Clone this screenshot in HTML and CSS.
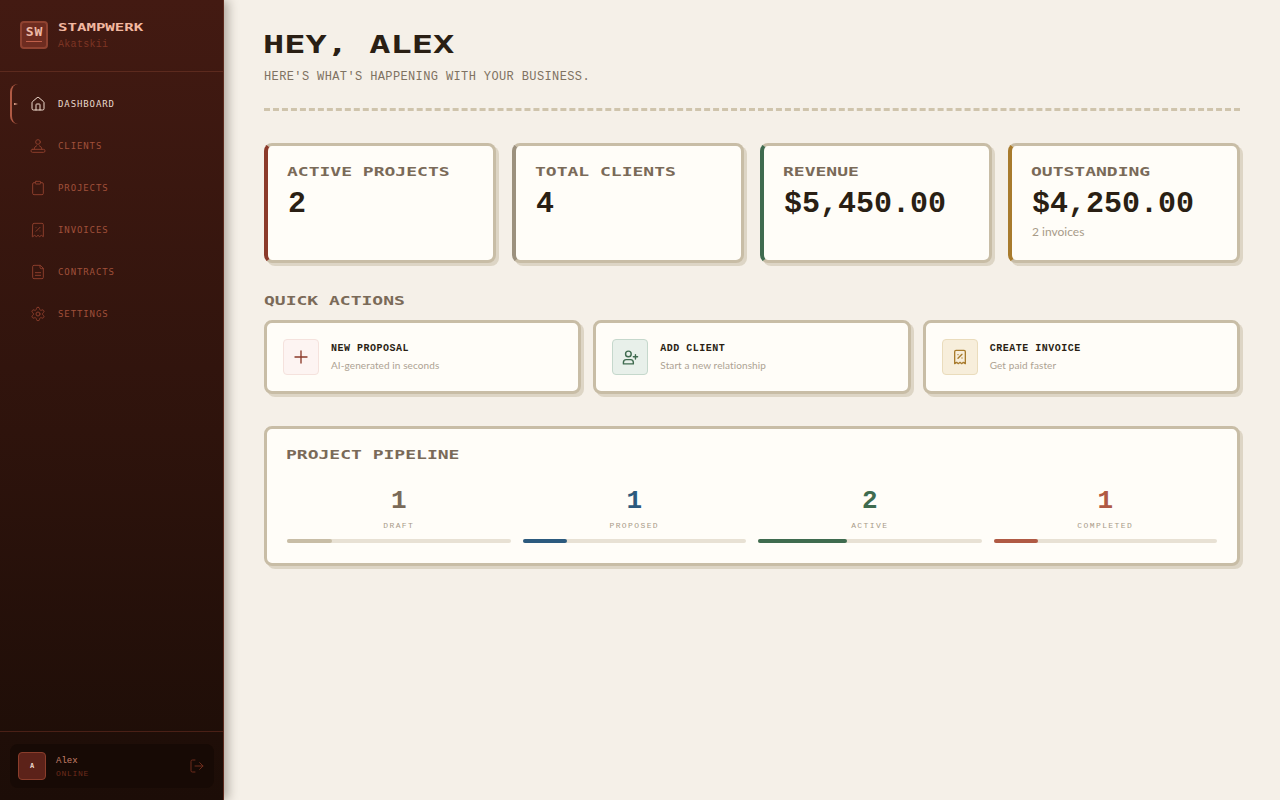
FILE: index.html
```html
<!DOCTYPE html>
<html>

	<head>
		<meta charset="UTF-8">
		<title>Stampwerk</title>
		<link rel="stylesheet" href="styles.css">
	</head>

	<body>
		<svg class="defs" width="0" height="0">
			<symbol id="i-receipt" viewBox="0 0 24 24">
				<path d="M4 4a2 2 0 0 1 2-2h12a2 2 0 0 1 2 2v18l-3-2-2.5 2-2.5-2-2.5 2L7 20l-3 2z" />
				<path d="M9 14l6-6" />
				<path d="M9 8.5h.01M15 13.5h.01" />
			</symbol>
		</svg>

		<aside class="sidebar">
			<div class="brand">
				<div class="logo"><span class="logo-text">SW</span><i class="logo-line"></i></div>
				<div>
					<div class="brand-name"><span class="wide">STAMPWERK</span></div>
					<div class="brand-sub">Akatskii</div>
				</div>
			</div>
			<nav class="nav">
				<a class="nav-item active">
					<svg class="icon" viewBox="0 0 24 24"><path d="M15 21v-8a1 1 0 0 0-1-1h-4a1 1 0 0 0-1 1v8" /><path d="M3 10a2 2 0 0 1 .709-1.528l7-5.999a2 2 0 0 1 2.582 0l7 5.999A2 2 0 0 1 21 10v9a2 2 0 0 1-2 2H5a2 2 0 0 1-2-2z" /></svg>
					DASHBOARD
				</a>
				<a class="nav-item">
					<svg class="icon" viewBox="0 0 24 24"><circle cx="12" cy="6" r="3.5" /><path d="M6 17a6 6 0 0 1 4-5.500M18 17a6 6 0 0 0-4-5.500" /><rect x="1.5" y="17" width="21" height="4.5" rx="2.2" /></svg>
					CLIENTS
				</a>
				<a class="nav-item">
					<svg class="icon" viewBox="0 0 24 24"><rect x="8" y="2" width="8" height="4" rx="1" /><path d="M16 4h2a2 2 0 0 1 2 2v14a2 2 0 0 1-2 2H6a2 2 0 0 1-2-2V6a2 2 0 0 1 2-2h2" /></svg>
					PROJECTS
				</a>
				<a class="nav-item">
					<svg class="icon"><use href="#i-receipt" /></svg>
					INVOICES
				</a>
				<a class="nav-item">
					<svg class="icon" viewBox="0 0 24 24"><path d="M15 2H6a2 2 0 0 0-2 2v16a2 2 0 0 0 2 2h12a2 2 0 0 0 2-2V7Z" /><path d="M15 2v3a2 2 0 0 0 2 2h3" /><path d="M16 13H8M16 17H8" /></svg>
					CONTRACTS
				</a>
				<a class="nav-item">
					<svg class="icon" viewBox="0 0 24 24"><path d="M12.22 2h-.44a2 2 0 0 0-2 2v.18a2 2 0 0 1-1 1.73l-.43.25a2 2 0 0 1-2 0l-.15-.08a2 2 0 0 0-2.73.73l-.22.38a2 2 0 0 0 .73 2.73l.15.1a2 2 0 0 1 1 1.72v.51a2 2 0 0 1-1 1.74l-.15.09a2 2 0 0 0-.73 2.73l.22.38a2 2 0 0 0 2.73.73l.15-.08a2 2 0 0 1 2 0l.43.25a2 2 0 0 1 1 1.73V20a2 2 0 0 0 2 2h.44a2 2 0 0 0 2-2v-.18a2 2 0 0 1 1-1.73l.43-.25a2 2 0 0 1 2 0l.15.08a2 2 0 0 0 2.73-.73l.22-.39a2 2 0 0 0-.73-2.73l-.15-.08a2 2 0 0 1-1-1.74v-.5a2 2 0 0 1 1-1.74l.15-.09a2 2 0 0 0 .73-2.73l-.22-.38a2 2 0 0 0-2.73-.73l-.15.08a2 2 0 0 1-2 0l-.43-.25a2 2 0 0 1-1-1.73V4a2 2 0 0 0-2-2z" /><circle cx="12" cy="12" r="3" /></svg>
					SETTINGS
				</a>
			</nav>
			<div class="side-foot">
				<div class="user">
					<div class="avatar">A</div>
					<div class="user-info">
						<div class="user-name">Alex</div>
						<div class="user-state">ONLINE</div>
					</div>
					<svg class="icon logout" viewBox="0 0 24 24"><path d="M9 21H5a2 2 0 0 1-2-2V5a2 2 0 0 1 2-2h4" /><path d="M16 17l5-5-5-5" /><path d="M21 12H9" /></svg>
				</div>
			</div>
		</aside>

		<main class="main">
			<header class="head">
				<h1 class="title"><span class="wide">HEY, ALEX</span></h1>
				<p class="subtitle">HERE'S WHAT'S HAPPENING WITH YOUR BUSINESS.</p>
			</header>

			<section class="stats">
				<div class="stat stat-red">
					<div class="label"><span class="wide">ACTIVE PROJECTS</span></div>
					<div class="value">2</div>
				</div>
				<div class="stat stat-grey">
					<div class="label"><span class="wide">TOTAL CLIENTS</span></div>
					<div class="value">4</div>
				</div>
				<div class="stat stat-green">
					<div class="label"><span class="wide">REVENUE</span></div>
					<div class="value">$5,450.00</div>
				</div>
				<div class="stat stat-gold">
					<div class="label"><span class="wide">OUTSTANDING</span></div>
					<div class="value">$4,250.00</div>
					<div class="note">2 invoices</div>
				</div>
			</section>

			<h2 class="label section-title"><span class="wide">QUICK ACTIONS</span></h2>
			<section class="actions">
				<div class="action">
					<div class="action-icon tint-red">
						<svg class="icon icon-plus" viewBox="0 0 24 24"><path d="M4 12h16M12 4v16" /></svg>
					</div>
					<div>
						<div class="action-name">NEW PROPOSAL</div>
						<div class="action-desc">AI-generated in seconds</div>
					</div>
				</div>
				<div class="action">
					<div class="action-icon tint-green">
						<svg class="icon" viewBox="0 0 24 24"><path d="M16 21v-2a4 4 0 0 0-4-4H6a4 4 0 0 0-4 4v2z" /><circle cx="9" cy="7" r="4" /><path d="M19 8v6M22 11h-6" /></svg>
					</div>
					<div>
						<div class="action-name">ADD CLIENT</div>
						<div class="action-desc">Start a new relationship</div>
					</div>
				</div>
				<div class="action">
					<div class="action-icon tint-gold">
						<svg class="icon icon-small"><use href="#i-receipt" /></svg>
					</div>
					<div>
						<div class="action-name">CREATE INVOICE</div>
						<div class="action-desc">Get paid faster</div>
					</div>
				</div>
			</section>

			<section class="pipeline">
				<h2 class="label pipe-title"><span class="wide">PROJECT PIPELINE</span></h2>
				<div class="pipe-grid">
					<div class="pipe">
						<div class="pipe-num c-draft">1</div>
						<div class="pipe-name">DRAFT</div>
						<div class="bar"><div class="fill f-draft" style="width: 20%"></div></div>
					</div>
					<div class="pipe">
						<div class="pipe-num c-proposed">1</div>
						<div class="pipe-name">PROPOSED</div>
						<div class="bar"><div class="fill f-proposed" style="width: 20%"></div></div>
					</div>
					<div class="pipe">
						<div class="pipe-num c-active">2</div>
						<div class="pipe-name">ACTIVE</div>
						<div class="bar"><div class="fill f-active" style="width: 40%"></div></div>
					</div>
					<div class="pipe">
						<div class="pipe-num c-completed">1</div>
						<div class="pipe-name">COMPLETED</div>
						<div class="bar"><div class="fill f-completed" style="width: 20%"></div></div>
					</div>
				</div>
			</section>
		</main>
	</body>

</html>
```

FILE: styles.css
```css
* {
	box-sizing: border-box;
}

body {
	margin: 0;
	height: 800px;
	overflow: hidden;
	display: flex;
	background: #f5f0e8;
	color: #2a1f14;
	font-family: "Lato", "Liberation Sans", sans-serif;
}

.defs {
	position: absolute;
}

/* stretched letters stand in for the pixel display face */
.wide {
	display: inline-block;
	font-family: "DejaVu Sans Mono", monospace;
	font-weight: bold;
	white-space: pre;
	transform: scaleX(1.5);
	transform-origin: left center;
}

.icon {
	width: 16px;
	height: 16px;
	flex: none;
	fill: none;
	stroke: currentColor;
	stroke-width: 1.5;
	stroke-linecap: round;
	stroke-linejoin: round;
}

/* sidebar */
.sidebar {
	width: 224px;
	flex: none;
	display: flex;
	flex-direction: column;
	background: linear-gradient(180deg, #431a12 0%, #1c0d07 100%);
	border-right: 1px solid #5c2a1e;
	box-shadow: 4px 0 10px rgba(42, 31, 20, 0.35);
	position: relative;
	z-index: 2;
}

.brand {
	height: 72px;
	padding: 21px 20px 0;
	display: flex;
	gap: 10px;
	border-bottom: 1px solid #5c2a1e;
}

.logo {
	width: 28px;
	height: 28px;
	display: flex;
	flex-direction: column;
	align-items: center;
	padding-top: 3px;
	background: #6e2c20;
	border: 2px solid #8f4230;
	border-radius: 4px;
}

.logo-text {
	font: bold 13px/12px "DejaVu Sans Mono", monospace;
	letter-spacing: 1px;
	margin-right: -1px;
	color: #efbba8;
}

.logo-line {
	width: 16px;
	height: 1px;
	margin-top: 3px;
	background: #c0604a;
}

.brand-name {
	margin-top: -1px;
	height: 13px;
	font-size: 11px;
	line-height: 13px;
	color: #f2b8a0;
}

.brand-name .wide {
	transform: scaleX(1.43);
}

.brand-sub {
	margin-top: 6px;
	font: 10px/12px "Liberation Mono", monospace;
	letter-spacing: 0.3px;
	color: #7d3524;
}

.nav {
	flex: 1;
	padding: 12px 10px;
	display: flex;
	flex-direction: column;
	gap: 2px;
}

.nav-item {
	height: 40px;
	display: flex;
	align-items: center;
	gap: 12px;
	padding-left: 20px;
	border-radius: 8px;
	position: relative;
	font: 9px/12px "DejaVu Sans Mono", monospace;
	letter-spacing: 0.9px;
	color: #a0503a;
}

.nav-item .icon {
	color: #8a3d2b;
}

.nav-item.active {
	border-left: 2px solid #b05a44;
	padding-left: 18px;
	color: #e8d8cc;
}

.nav-item.active .icon {
	color: #f0dccf;
}

.nav-item.active::before {
	content: "";
	position: absolute;
	left: 2px;
	top: 19px;
	border-left: 4px solid #e8a890;
	border-top: 1.5px solid transparent;
	border-bottom: 1.5px solid transparent;
}

.side-foot {
	height: 69px;
	padding: 12px 9px 12px 10px;
	border-top: 1px solid #4a2016;
}

.user {
	height: 44px;
	padding: 0 9px 0 8px;
	display: flex;
	align-items: center;
	gap: 10px;
	background: #170a05;
	border-radius: 8px;
}

.avatar {
	width: 28px;
	height: 28px;
	display: flex;
	align-items: center;
	justify-content: center;
	background: #5c2219;
	border: 1px solid #8a3d2b;
	border-radius: 4px;
	font: bold 7px "DejaVu Sans Mono", monospace;
	color: #f0dccf;
}

.user-info {
	flex: 1;
}

.user-name {
	font: 9px/12px "Liberation Mono", monospace;
	color: #c8806a;
}

.user-state {
	margin-top: 2px;
	font: 8px/9px "Liberation Mono", monospace;
	letter-spacing: 0.7px;
	color: #6e2c1c;
}

.logout {
	color: #6e2c1c;
}

/* main column */
.main {
	flex: 1;
	padding: 31px 40px 32px;
}

.head {
	height: 80px;
	border-bottom: 3px dashed #cfc4ac;
}

.title {
	margin: 0 0 0 -1px;
	height: 26px;
	font-size: 24px;
	line-height: 26px;
	font-weight: normal;
	color: #2a1f14;
}

.title .wide {
	transform: scaleX(1.47);
}

.subtitle {
	margin: 12px 0 0;
	font: 12px/16px "Liberation Mono", monospace;
	letter-spacing: 0.38px;
	color: #7f7262;
}

.stats {
	margin-top: 32px;
	display: grid;
	grid-template-columns: repeat(4, 1fr);
	gap: 16px;
}

.stat {
	height: 120px;
	padding: 19px 20px 0 19px;
	background: #fffdf8;
	border: 3px solid #c8bda6;
	border-left-width: 4px;
	border-radius: 8px;
	box-shadow: 3px 3px 0 #ddd5c5;
}

.stat-red {
	border-left-color: #8b3a2a;
}

.stat-grey {
	border-left-color: #9c917e;
}

.stat-green {
	border-left-color: #3f6b4f;
}

.stat-gold {
	border-left-color: #a87b2d;
}

.label {
	margin: 0;
	height: 14px;
	font-size: 12px;
	line-height: 14px;
	font-weight: normal;
	color: #7a6a58;
}

.value {
	margin: 8px 0 0 1px;
	font: bold 30px/34px "Liberation Mono", monospace;
	color: #2a1f14;
}

.note {
	margin: 4px 0 0 1px;
	font-size: 12px;
	line-height: 14px;
	color: #a89b88;
}

.section-title {
	margin-top: 31px;
}

.actions {
	margin-top: 12px;
	display: grid;
	grid-template-columns: repeat(3, 1fr);
	gap: 12px;
}

.action {
	height: 74px;
	padding: 0 16px;
	display: flex;
	align-items: center;
	gap: 12px;
	background: #fffdf8;
	border: 3px solid #c8bda6;
	border-radius: 8px;
	box-shadow: 3px 3px 0 #ddd5c5;
}

.action-icon {
	width: 36px;
	height: 36px;
	flex: none;
	display: flex;
	align-items: center;
	justify-content: center;
	border: 1px solid;
	border-radius: 4px;
}

.action-icon .icon {
	width: 17px;
	height: 17px;
	stroke-width: 2;
}

.action-icon .icon-plus {
	width: 18px;
	height: 18px;
	stroke-width: 1.8;
}

.action-icon .icon-small {
	width: 16px;
	height: 16px;
}

.tint-red {
	background: #fdf4f2;
	border-color: #f5e2dd;
	color: #8b3a2a;
}

.tint-green {
	background: #e8f0ea;
	border-color: #c5d8cc;
	color: #3f6b4f;
}

.tint-gold {
	background: #f7eedb;
	border-color: #eadcbc;
	color: #a87b2d;
}

.action-name {
	font: bold 10px/14px "Liberation Mono", monospace;
	letter-spacing: 0.5px;
	color: #2a1f14;
}

.action-desc {
	margin-top: 2px;
	font-size: 10px;
	line-height: 14px;
	letter-spacing: 0.1px;
	color: #ada292;
}

.pipeline {
	margin-top: 32px;
	height: 140px;
	padding: 19px 20px 0;
	background: #fffdf8;
	border: 3px solid #c8bda6;
	border-radius: 8px;
	box-shadow: 3px 3px 0 #ddd5c5;
}

.pipe-title {
	margin-left: -1px;
}

.pipe-grid {
	margin-top: 24px;
	display: grid;
	grid-template-columns: repeat(4, 1fr);
	gap: 12px;
}

.pipe {
	text-align: center;
}

.pipe-num {
	font: bold 26px/30px "Liberation Mono", monospace;
}

.pipe-name {
	margin-top: 4px;
	font: 8px/12px "Liberation Mono", monospace;
	letter-spacing: 1.4px;
	color: #a89b88;
}

.c-draft {
	color: #7a6a58;
}

.c-proposed {
	color: #2c5a7e;
}

.c-active {
	color: #3f6b4f;
}

.c-completed {
	color: #b05a44;
}

.bar {
	margin-top: 7px;
	height: 4px;
	background: #e8e1d4;
	border-radius: 2px;
}

.fill {
	height: 100%;
	border-radius: 2px;
}

.f-draft {
	background: #c8bda6;
}

.f-proposed {
	background: #2c5a7e;
}

.f-active {
	background: #3f6b4f;
}

.f-completed {
	background: #b05a44;
}
```
